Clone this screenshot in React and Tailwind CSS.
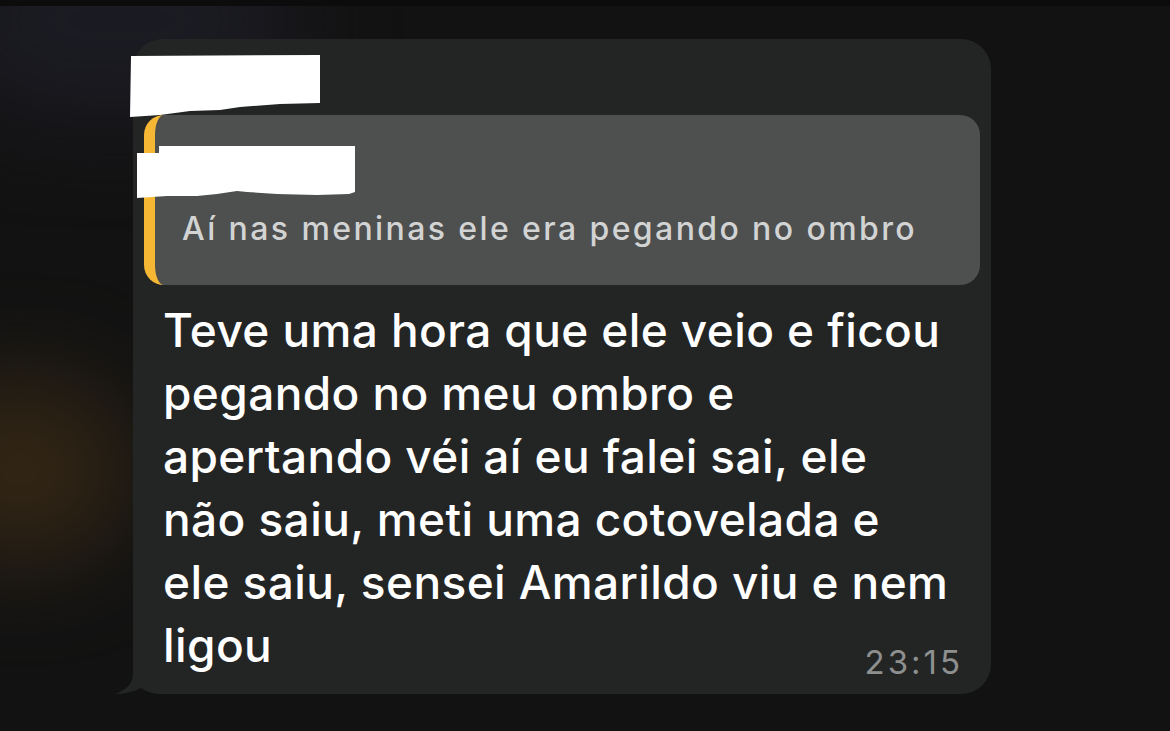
import React from "react";

const lines = [
  "Teve uma hora que ele veio e ficou",
  "pegando no meu ombro e",
  "apertando véi aí eu falei sai, ele",
  "não saiu, meti uma cotovelada e",
  "ele saiu, sensei Amarildo viu e nem",
];

const font = { fontFamily: '"Inter", "Roboto", "Liberation Sans", sans-serif' };

const App = () => {
  return (
    <div
      className="relative w-[1170px] h-[731px] overflow-hidden bg-[#121212]"
      style={font}
    >
      {/* background glow */}
      <div className="absolute -left-[90px] top-[380px] w-[220px] h-[180px] rounded-full bg-[#4a3417] opacity-60 blur-[50px]" />
      <div className="absolute -left-[60px] -top-[80px] w-[360px] h-[200px] rounded-full bg-[#1f1f2a] opacity-70 blur-[50px]" />
      <div className="absolute left-0 top-0 w-full h-[6px] bg-[#0c0c0c]" />

      <div className="relative ml-[133px] mt-[39px] w-[858px] rounded-[30px] bg-[#232525] pt-[76px] pb-[17px]">
        {/* tail */}
        <svg
          className="absolute -left-[19px] bottom-0"
          width="50"
          height="50"
          viewBox="0 0 50 50"
        >
          <path
            d="M19 0 L19 30 C19 40 11 47 0 50 C10 50 19 48 27 44 C33 48 40 50 50 50 L50 0 Z"
            fill="#232525"
          />
        </svg>

        {/* sender name (redacted) */}
        <svg
          className="absolute -left-[3px] top-[16px]"
          width="192"
          height="64"
          viewBox="0 0 192 64"
        >
          <path
            d="M1 1 L190 0 L190 48 L150 49 L110 52 L90 55 L60 56 L30 60 L0 62 Z"
            fill="#ffffff"
          />
        </svg>

        {/* quoted message */}
        <div className="relative mx-[11px] h-[170px] rounded-[20px] border-l-[11px] border-[#f6b834] bg-[#4e4f4f] pl-[27px] pt-[94px]">
          <svg
            className="absolute -left-[18px] top-[31px]"
            width="220"
            height="54"
            viewBox="0 0 220 54"
          >
            <path
              d="M0 7 L22 7 L22 0 L218 0 L218 46 L212 48 L180 49 L140 48 L110 46 L100 45 L80 48 L60 50 L30 50 L0 52 Z"
              fill="#ffffff"
            />
          </svg>
          <p className="whitespace-nowrap text-[32px] leading-[40px] font-medium text-[#d2d3d3] tracking-[2.4px]">
            Aí nas meninas ele era pegando no ombro
          </p>
        </div>

        {/* message body */}
        <div className="flex flex-col px-[30px] pt-[14px] text-[46px] leading-[63px] font-medium tracking-[0.4px] text-white">
          {lines.map((line) => (
            <div key={line} className="whitespace-nowrap">
              {line}
            </div>
          ))}
          <div className="flex items-end justify-between">
            <span>ligou</span>
            <span className="-mb-[5px] mr-[-2px] text-[33px] leading-[40px] font-normal text-[#8e8f8f] tracking-[3px]">
              23:15
            </span>
          </div>
        </div>
      </div>
    </div>
  );
};

export default App;
